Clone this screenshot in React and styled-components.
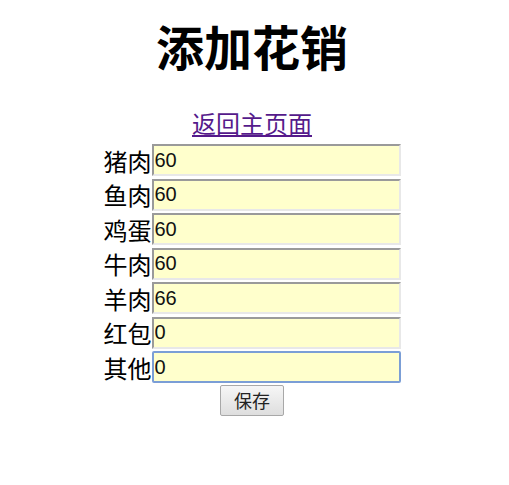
import React from 'react'
import styled, { createGlobalStyle } from 'styled-components'

const GlobalStyle = createGlobalStyle`
	body {
		margin: 0;
		background: #fff;
		font-family: "Liberation Sans", "Noto Sans CJK SC", sans-serif;
		color: #000;
	}
`

const Page = styled.div`
	width: 504px;
	display: flex;
	flex-direction: column;
	align-items: center;
`

const Title = styled.h1`
	margin: 14px 0 0;
	font-size: 48px;
	line-height: 62px;
	font-weight: bold;
	font-family: "Noto Sans CJK SC", sans-serif;
`

const BackLink = styled.a`
	margin: 33px 0 6px;
	font-size: 24px;
	line-height: 28px;
	color: #551a8b;
	text-decoration: underline;
	font-family: "Noto Sans CJK SC", sans-serif;
`

const Form = styled.form`
	display: flex;
	flex-direction: column;
	align-items: center;
`

const Row = styled.div`
	display: flex;
	align-items: center;
	height: 34.5px;
`

const Label = styled.label`
	font-size: 24px;
	font-family: "Noto Sans CJK SC", sans-serif;
	width: 48px;
	white-space: nowrap;
`

const Field = styled.input`
	box-sizing: border-box;
	width: 249px;
	height: 32px;
	margin: 0;
	padding: 0 1px;
	background: #ffffcc;
	font-family: "Liberation Sans", sans-serif;
	font-size: 20px;
	color: #111;
	border: 2px solid;
	border-color: ${p => (p.$active ? '#7b9ed6' : '#9a9a9a #e8e8e8 #e8e8e8 #9a9a9a')};
	border-radius: ${p => (p.$active ? '2px' : '0')};
	outline: none;
`

const SaveButton = styled.button`
	margin-top: 0;
	width: 64px;
	height: 31px;
	font-size: 18px;
	font-family: "Noto Sans CJK SC", sans-serif;
	color: #222;
	background: linear-gradient(#f6f6f6, #dedede);
	border: 1px solid #a8a8a8;
	border-radius: 2px;
	padding: 0;
`

const items = [
	['猪肉', '60'],
	['鱼肉', '60'],
	['鸡蛋', '60'],
	['牛肉', '60'],
	['羊肉', '66'],
	['红包', '0'],
	['其他', '0'],
]

const App = () => {
	return (
		<>
			<GlobalStyle />
			<Page>
				<Title>添加花销</Title>
				<BackLink href='#'>返回主页面</BackLink>
				<Form onSubmit={e => e.preventDefault()}>
					{items.map(([name, value], i) => (
						<Row key={name}>
							<Label>{name}</Label>
							<Field
								defaultValue={value}
								$active={i === items.length - 1}
								autoFocus={i === items.length - 1}
							/>
						</Row>
					))}
					<SaveButton type='submit'>保存</SaveButton>
				</Form>
			</Page>
		</>
	)
}

export default App
